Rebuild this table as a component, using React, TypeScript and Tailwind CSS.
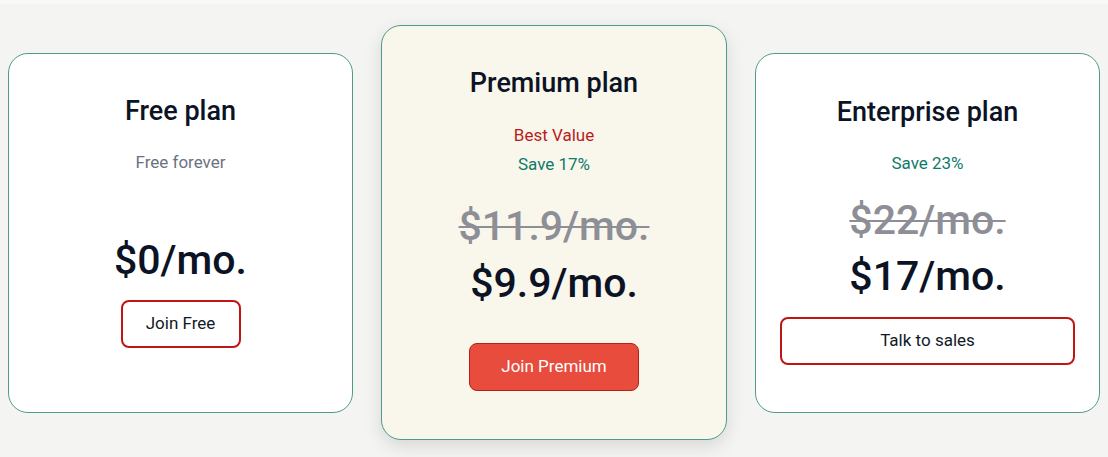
import type { ReactNode } from 'react'

const font = { fontFamily: 'Roboto, "Liberation Sans", sans-serif' }

function Card({
  className,
  children,
}: {
  className: string
  children: ReactNode
}) {
  return (
    <div
      className={`flex w-[345px] shrink-0 flex-col items-center rounded-[20px] border border-[#4f9a8c] text-center ${className}`}
    >
      {children}
    </div>
  )
}

function Title({ children }: { children: ReactNode }) {
  return <h2 className="text-[27px] font-medium leading-[32px] text-[#0b1324]">{children}</h2>
}

function Price({ children, className = '' }: { children: ReactNode; className?: string }) {
  return <div className={`text-[41px] font-medium leading-[48px] text-[#0b1324] ${className}`}>{children}</div>
}

function OldPrice({ children, className = '' }: { children: ReactNode; className?: string }) {
  return (
    <div className={`text-[41px] font-medium leading-[48px] text-[#8e8e96] line-through decoration-[2px] ${className}`}>
      {children}
    </div>
  )
}

export default function App() {
  return (
    <div className="min-h-[457px] w-[1108px] bg-[#f4f4f2]" style={font}>
      <div className="h-[4px] bg-[#f9f9f8]" />
      <div className="flex h-[453px] items-center gap-[28px] px-[8px] pt-[4px]">
        <Card className="h-[360px] bg-white pt-[41px]">
          <Title>Free plan</Title>
          <p className="mt-[23px] text-[17px] leading-6 text-[#6b7280]">Free forever</p>
          <Price className="mt-[62px]">$0/mo.</Price>
          <button className="mt-[16px] h-[48px] w-[120px] rounded-[8px] border-2 border-[#c01515] bg-white text-[17px] text-[#111827]">
            Join Free
          </button>
        </Card>

        <Card className="h-[415px] w-[346px] bg-[#f9f6ec] pt-[41px] shadow-[0_6px_18px_rgba(0,0,0,0.12)]">
          <Title>Premium plan</Title>
          <p className="mt-[24px] text-[17px] leading-6 text-[#b91c1c]">Best Value</p>
          <p className="mt-[5px] text-[17px] leading-6 text-[#0f7a6a]">Save 17%</p>
          <OldPrice className="mt-[26px]">$11.9/mo.</OldPrice>
          <Price className="mt-[9px]">$9.9/mo.</Price>
          <button className="mt-[36px] h-[48px] w-[170px] rounded-[8px] border border-[#b81f16] bg-[#e74c3c] text-[17px] text-white">
            Join Premium
          </button>
        </Card>

        <Card className="h-[360px] bg-white px-6 pt-[42px]">
          <Title>Enterprise plan</Title>
          <p className="mt-[23px] text-[17px] leading-6 text-[#0f7a6a]">Save 23%</p>
          <OldPrice className="mt-[21px]">$22/mo.</OldPrice>
          <Price className="mt-[8px]">$17/mo.</Price>
          <button className="mt-[17px] h-[48px] w-full rounded-[8px] border-2 border-[#c01515] bg-white text-[17px] text-[#111827]">
            Talk to sales
          </button>
        </Card>
      </div>
    </div>
  )
}
